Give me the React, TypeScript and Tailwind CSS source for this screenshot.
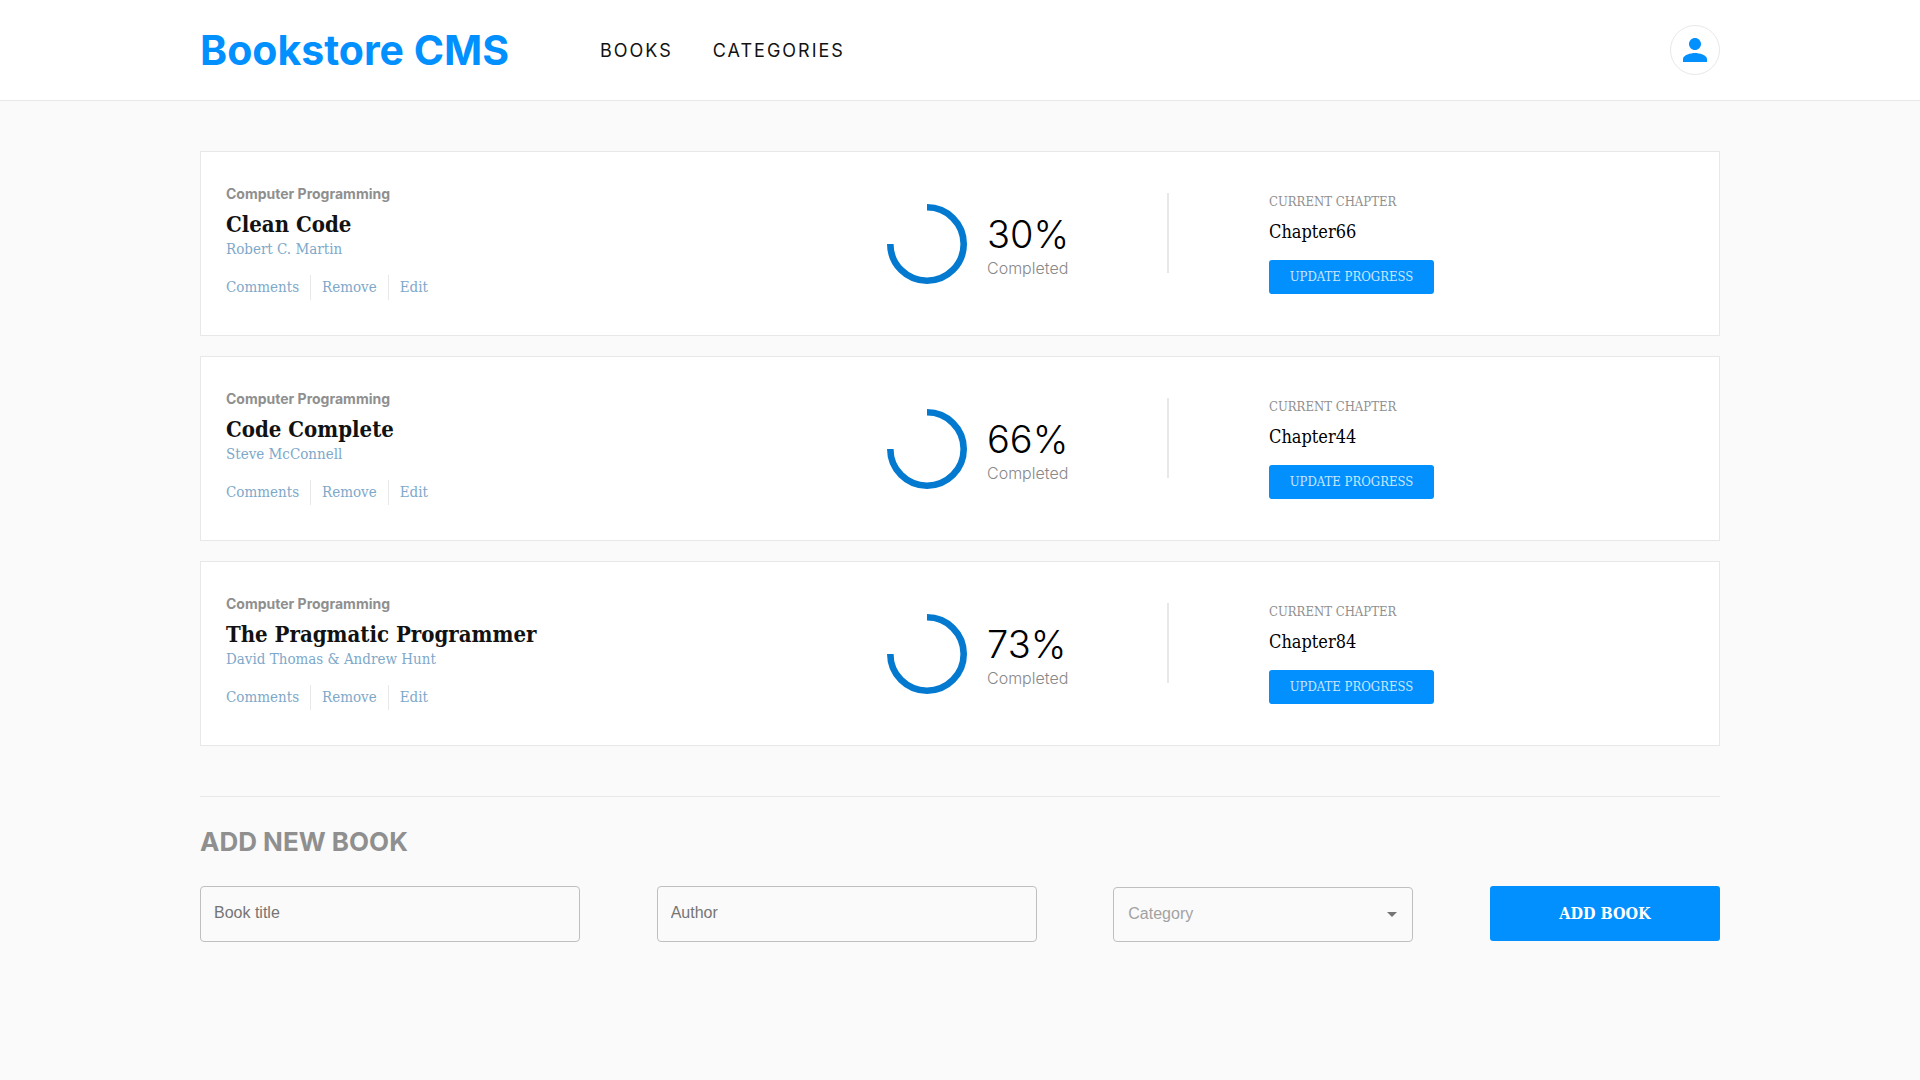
import { MdArrowDropDown, MdPerson } from "react-icons/md";

const sans = "font-['Inter',sans-serif]";
const slab = "font-['DejaVu_Serif_Condensed','DejaVu_Serif',serif]";

type Book = { title: string; author: string; percent: number; chapter: string };

const books: Book[] = [
  { title: "Clean Code", author: "Robert C. Martin", percent: 30, chapter: "Chapter66" },
  { title: "Code Complete", author: "Steve McConnell", percent: 66, chapter: "Chapter44" },
  { title: "The Pragmatic Programmer", author: "David Thomas & Andrew Hunt", percent: 73, chapter: "Chapter84" },
];

function Header() {
  return (
    <header className="border-b border-[#e8e8e8] bg-white">
      <div className={`mx-auto flex h-[100px] items-center px-[200px] ${sans}`}>
        <h1 className="w-[400px] text-[41px] leading-[50px] font-bold text-[#0290ff]">
          <a href="#home">Bookstore CMS</a>
        </h1>
        <nav className="flex flex-1 gap-10 pt-0.5 text-lg tracking-[2px] text-[#121212]">
          <a href="#books">BOOKS</a>
          <a href="#categories">CATEGORIES</a>
        </nav>
        <button
          type="button"
          aria-label="Account"
          className="flex size-[50px] items-center justify-center rounded-full border border-[#e8e8e8] bg-white text-[#0290ff]"
        >
          <MdPerson size={36} />
        </button>
      </div>
    </header>
  );
}

function ProgressRing() {
  return (
    <svg viewBox="0 0 80 80" className="size-20" fill="none" stroke="#0379d0" strokeWidth="6.6" aria-hidden="true">
      <path d="M40 3.3A36.7 36.7 0 1 1 3.3 40" />
    </svg>
  );
}

function BookCard({ book }: { book: Book }) {
  return (
    <li className="grid h-[185px] grid-cols-[661fr_382fr_425fr] border border-[#e8e8e8] bg-white px-[25px]">
      <div className={`pt-8 ${slab}`}>
        <p className={`text-sm leading-5 font-bold text-[#8f8f8f] ${sans}`}>Computer Programming</p>
        <h2 className="mt-1 text-[22px] leading-8 font-bold text-[#121212]">{book.title}</h2>
        <p className="text-[15px] leading-[18px] text-[#7ea8c9]">{book.author}</p>
        <div className="mt-[17px] flex text-[15px] leading-[25px] text-[#7ea8c9]">
          <button type="button" className="border-r border-[#e8e8e8] pr-[11px]">Comments</button>
          <button type="button" className="border-r border-[#e8e8e8] px-[11px]">Remove</button>
          <button type="button" className="pl-[11px]">Edit</button>
        </div>
      </div>
      <div className={`flex justify-between pr-[100px] ${sans}`}>
        <div className="flex items-center gap-5">
          <ProgressRing />
          <div className="pt-1">
            <p className="text-[38px] leading-[44px] font-light text-black">{book.percent}%</p>
            <p className="text-base leading-6 font-light text-[#888888]">Completed</p>
          </div>
        </div>
        <div className="mt-[41px] h-20 w-0.5 bg-[#e8e8e8]" />
      </div>
      <div className={`pt-10 ${slab}`}>
        <p className="text-[13px] leading-5 text-[#8f8f8f]">CURRENT CHAPTER</p>
        <p className="mt-2 text-lg leading-6 text-black">{book.chapter}</p>
        <button
          type="button"
          className="mt-4 h-[34px] w-[165px] rounded-[3px] bg-[#0290ff] text-[13px] text-[#c8e7ff]"
        >
          UPDATE PROGRESS
        </button>
      </div>
    </li>
  );
}

function AddBook() {
  const field =
    "h-14 w-[380px] rounded border border-[#bfbfbf] bg-transparent px-[13px] pb-0.5 text-base text-black placeholder:text-[#757575]";
  return (
    <section className="mt-[50px] border-t border-[#e8e8e8] pt-[29px]">
      <h2 className={`text-[26px] leading-8 font-bold text-[#8f8f8f] ${sans}`}>ADD NEW BOOK</h2>
      <form className="mt-7 flex items-end justify-between font-['Liberation_Sans',sans-serif]">
        <input type="text" aria-label="Book title" placeholder="Book title" className={field} />
        <input type="text" aria-label="Author" placeholder="Author" className={field} />
        <div className="relative w-[300px]">
          <select
            aria-label="Category"
            defaultValue=""
            className="h-[55px] w-full appearance-none rounded border border-[#bfbfbf] bg-transparent px-3.5 pb-0.5 text-base text-[#a2a2a2]"
          >
            <option value="">Category</option>
            <option>Computer Programming</option>
          </select>
          <MdArrowDropDown size={24} className="pointer-events-none absolute top-[15px] right-[9px] text-[#757575]" />
        </div>
        <button
          type="button"
          className={`h-[55px] w-[230px] self-start rounded-[3px] bg-[#0290ff] text-base font-bold text-white ${slab}`}
        >
          ADD BOOK
        </button>
      </form>
    </section>
  );
}

export default function App() {
  return (
    <div className="min-h-screen bg-[#fafafa]">
      <Header />
      <main className="px-[200px] pt-[50px] pb-16">
        <ul className="flex flex-col gap-5">
          {books.map((book) => (
            <BookCard key={book.title} book={book} />
          ))}
        </ul>
        <AddBook />
      </main>
    </div>
  );
}
